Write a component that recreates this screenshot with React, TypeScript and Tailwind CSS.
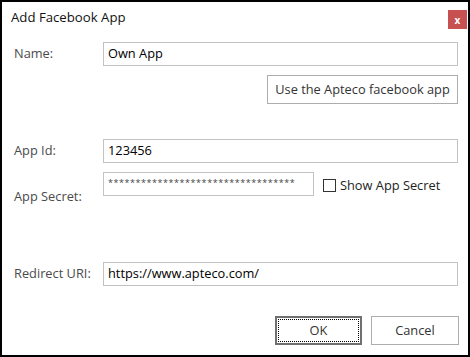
export default function App() {
  return (
    <div
      className="w-[470px] h-[357px] border-2 border-black bg-white flex flex-col text-[12.8px] text-black"
      style={{ fontFamily: '"Segoe UI", "Open Sans", "Noto Sans", sans-serif' }}
    >
      {/* title bar */}
      <div className="flex items-start h-[32px] pl-[9px] pr-[1px]">
        <span className="mt-[6px] text-[13.2px] text-[#111]">Add Facebook App</span>
        <button className="ml-auto mt-[8px] w-[19px] h-[19px] bg-[#c75050] text-white text-[10px] font-bold leading-none flex items-center justify-center">
          x
        </button>
      </div>

      <div className="flex flex-col pl-[12px] pr-[10px]">
        <div className="flex items-center mt-[8px] h-[24px]">
          <span className="w-[89px] text-[#4a4a4a]">Name:</span>
          <div className="flex-1 h-full border border-[#c3c3c3] flex items-center px-[4px]">Own App</div>
        </div>

        <div className="flex justify-end mt-[9px]">
          <button className="w-[191px] h-[29px] border border-[#adadad] bg-white text-[#333] flex items-center justify-center">
            Use the Apteco facebook app
          </button>
        </div>

        <div className="flex items-center mt-[35px] h-[24px]">
          <span className="w-[89px] text-[#4a4a4a]">App Id:</span>
          <div className="flex-1 h-full border border-[#c3c3c3] flex items-center px-[4px]">123456</div>
        </div>

        <div className="flex items-start mt-[9px] h-[24px]">
          <span className="w-[89px] text-[#4a4a4a] mt-[15px]">App Secret:</span>
          <div className="w-[211px] h-full border border-[#c3c3c3] flex items-start pt-[3px] px-[4px] text-[9px] tracking-[0.55px] text-[#444] overflow-hidden whitespace-nowrap">
            **********************************
          </div>
          <label className="flex items-center ml-[9px] mt-[4px] gap-[4px]">
            <span className="w-[13px] h-[13px] border border-[#333] bg-white inline-block"></span>
            <span className="text-[#222]">Show App Secret</span>
          </label>
        </div>

        <div className="flex items-center mt-[66px] h-[24px]">
          <span className="w-[89px] text-[#4a4a4a]">Redirect URI:</span>
          <div className="flex-1 h-full border border-[#c3c3c3] flex items-center px-[4px]">https://www.apteco.com/</div>
        </div>

        <div className="flex justify-end gap-[9px] mt-[30px]">
          <button className="relative w-[87px] h-[29px] border-2 border-[#707070] bg-white text-[#333] flex items-center justify-center">
            <span className="absolute inset-[1px] border border-dotted border-black"></span>
            OK
          </button>
          <button className="w-[88px] h-[29px] border border-[#adadad] bg-white text-[#333] flex items-center justify-center -mr-[1px]">
            Cancel
          </button>
        </div>
      </div>
    </div>
  );
}
